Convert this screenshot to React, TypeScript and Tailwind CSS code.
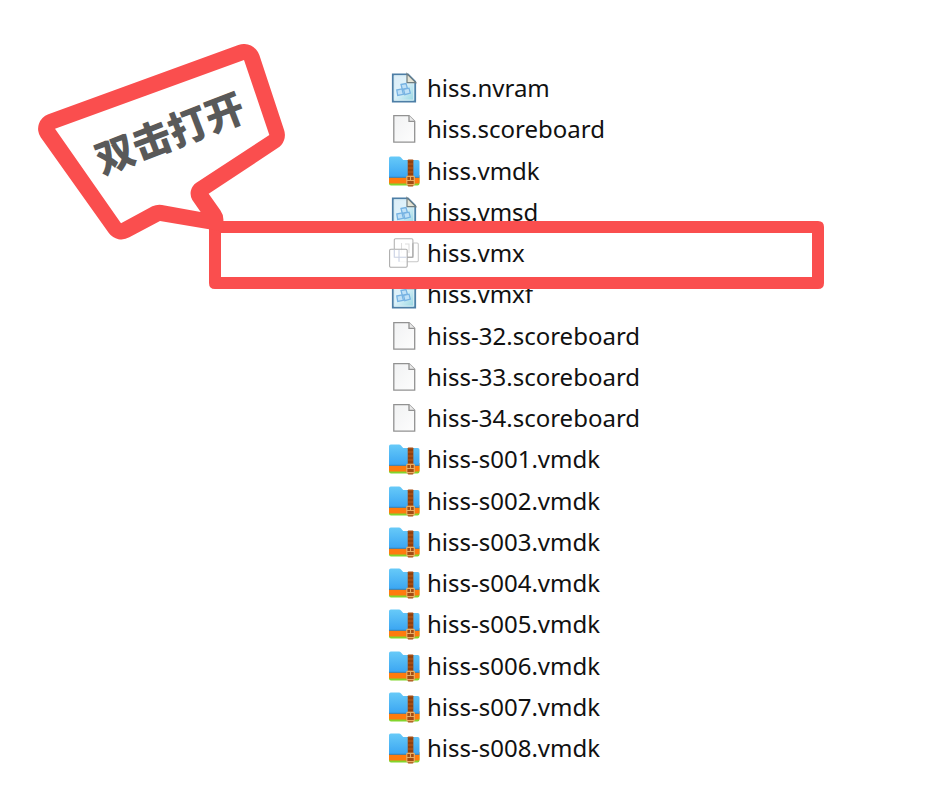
type Kind = "config" | "blank" | "archive" | "machine";

const files: { name: string; kind: Kind; tracking: string }[] = [
  { name: "hiss.nvram", kind: "config", tracking: "tracking-[0px]" },
  { name: "hiss.scoreboard", kind: "blank", tracking: "tracking-[0px]" },
  { name: "hiss.vmdk", kind: "archive", tracking: "tracking-[0px]" },
  { name: "hiss.vmsd", kind: "config", tracking: "tracking-[0px]" },
  { name: "hiss.vmx", kind: "machine", tracking: "tracking-[0px]" },
  { name: "hiss.vmxf", kind: "config", tracking: "tracking-[0px]" },
  { name: "hiss-32.scoreboard", kind: "blank", tracking: "tracking-[0px]" },
  { name: "hiss-33.scoreboard", kind: "blank", tracking: "tracking-[0px]" },
  { name: "hiss-34.scoreboard", kind: "blank", tracking: "tracking-[0px]" },
  ...[1, 2, 3, 4, 5, 6, 7, 8].map((n) => ({
    name: `hiss-s00${n}.vmdk`,
    kind: "archive" as Kind,
    tracking: "tracking-[0px]",
  })),
];

function FileIcon({ kind }: { kind: Kind }) {
  return (
    <svg viewBox="0 0 32 32" className="h-8 w-8 shrink-0">
      {kind === "config" && (
        <>
          <path d="M4.8 2.3H20L27.2 9.5V29.7H4.8Z" fill="url(#sheet)" stroke="#4d7ea6" strokeWidth="1.8" />
          <path d="M6.4 3.9H19V11H25.6V28.1H6.4Z" fill="none" stroke="#d5ebf3" strokeWidth="1" />
          <path d="M19 1.8L27.8 10.6H19Z" fill="#e6e4d4" stroke="#6f7d80" strokeWidth="1.2" />
          <g fill="#c0e1f7" stroke="#76b2e2" strokeWidth="1.3">
            <path d="M13 12.5L18 11.5L19.4 16.2L14.3 17.5Z" />
            <path d="M8.8 18L14 16.9L15.4 22.3L9.7 23.5Z" />
            <path d="M15.6 17.4L21 16.2L22.3 21L16.8 22.6Z" />
          </g>
        </>
      )}
      {kind === "blank" && (
        <>
          <path d="M5.8 2.6H21L26.7 8.3V29.2H5.8Z" fill="url(#paper)" stroke="#929292" strokeWidth="1.3" />
          <path d="M21 2.6V8.3H26.7" fill="#e9e9e9" stroke="#929292" strokeWidth="1.3" />
        </>
      )}
      {kind === "archive" && (
        <>
          <path d="M1 23H31.5V28.5Q31.5 30.5 29.5 30.5H3Q1 30.5 1 28.5Z" fill="#82d52c" />
          <path d="M1 20H31.5V27.5Q31.5 28.5 30 28.5H2.5Q1 28.5 1 27.5Z" fill="#ff7b0d" />
          <path d="M1 3.2Q1 1.5 2.7 1.5H11Q12.2 1.5 13 2.4L15.2 5H29.8Q31.5 5 31.5 6.7V22.5H1Z" fill="url(#folder)" />
          <path d="M1 22.3H31.5" stroke="#247cb8" strokeWidth=".8" />
          <rect x="19.7" y="4.5" width="5.7" height="27" rx=".8" fill="#a64d12" />
          <path d="M20 7H25M20 11H25M20 15H25M20 19H25" stroke="#7d3609" strokeWidth="1" />
          <rect x="18.8" y="21.4" width="7.5" height="8.2" rx=".7" fill="#a34b12" stroke="#e9ad62" strokeWidth="1.2" />
          <path d="M18.8 25.5H26.3M22.5 22V25.5" stroke="#e9ad62" strokeWidth="1.1" />
        </>
      )}
      {kind === "machine" && (
        <g fill="none" strokeWidth="1.1">
          <rect x="11" y="6" width="19.3" height="18.8" rx="1.2" fill="#fff" stroke="#c7c7c7" />
          <rect x="6.3" y="1.7" width="18.6" height="18.5" rx="1.2" fill="#fff" stroke="#b4b4b4" />
          <path d="M13.5 6V16M17 7H21V16" stroke="#dedede" />
          <rect x="1.6" y="12.2" width="17.6" height="18" rx="1.2" fill="#fff" fillOpacity=".85" stroke="#adadad" />
          <path d="M6.3 12.8V20.2H18.5M11 24.8V13" stroke="#ccd3e5" />
          <path d="M19.2 20.2H24.9V6.2" stroke="#a8a8a8" />
        </g>
      )}
    </svg>
  );
}

export default function App() {
  return (
    <main className="relative h-[801px] w-[925px] overflow-hidden bg-white pt-[67.4px] pl-[388px]">
      <svg className="absolute h-0 w-0">
        <defs>
          <linearGradient id="sheet" x2="1" y2="1">
            <stop stopColor="#ddecf7" />
            <stop offset=".45" stopColor="#dff3fb" />
            <stop offset="1" stopColor="#8fd4df" />
          </linearGradient>
          <linearGradient id="paper" x2="1" y2="1">
            <stop stopColor="#f1f2f3" />
            <stop offset="1" stopColor="#fdfdfd" />
          </linearGradient>
          <linearGradient id="folder" x2="0" y2="1">
            <stop stopColor="#67caf8" />
            <stop offset="1" stopColor="#3aa5f2" />
          </linearGradient>
        </defs>
      </svg>

      <ul className="flex flex-col">
        {files.map((file) => (
          <li key={file.name} className="flex h-[41.27px] items-center gap-[7px]">
            <FileIcon kind={file.kind} />
            <span
              className={`font-['Noto_Sans','Open_Sans',sans-serif] text-[24px] leading-8 whitespace-nowrap text-[#111] ${file.tracking}`}
            >
              {file.name}
            </span>
          </li>
        ))}
      </ul>

      <div className="absolute top-[221px] left-[209px] h-[68px] w-[615px] rounded-[6px] bg-transparent">
        <svg viewBox="0 0 615 68" className="block h-full w-full">
          <path
            fillRule="evenodd"
            fill="#fa4e4e"
            d="M0 0H609Q615 0 615 6V62Q615 68 609 68H6Q0 68 0 62ZM12 12V56H603V12Z"
          />
        </svg>
      </div>

      <svg viewBox="0 0 810 630" className="absolute top-[35px] left-[30px] h-[210px] w-[270px]">
        <path
          fillRule="evenodd"
          fill="#fa4e4e"
          d="M55 238L625 30A49 49 0 0 1 688 60L762 284A47 47 0 0 1 742 340L536 476L571 526Q582 541 580 560V590L537 583L390 558L298 607A47 47 0 0 1 237 595L32 307A46 46 0 0 1 55 238ZM75 281L273 565L367 514Q380 508 396 510L512 531L487 495A39 39 0 0 1 499 443L718 300L642 75Z"
        />
      </svg>
      <div className="absolute top-[107px] left-[89px] flex h-12 w-40 -rotate-[21deg] items-center justify-center font-['Noto_Sans_CJK_SC',sans-serif] text-[39px] leading-none font-black whitespace-nowrap text-[#595959]">
        双击打开
      </div>
    </main>
  );
}
